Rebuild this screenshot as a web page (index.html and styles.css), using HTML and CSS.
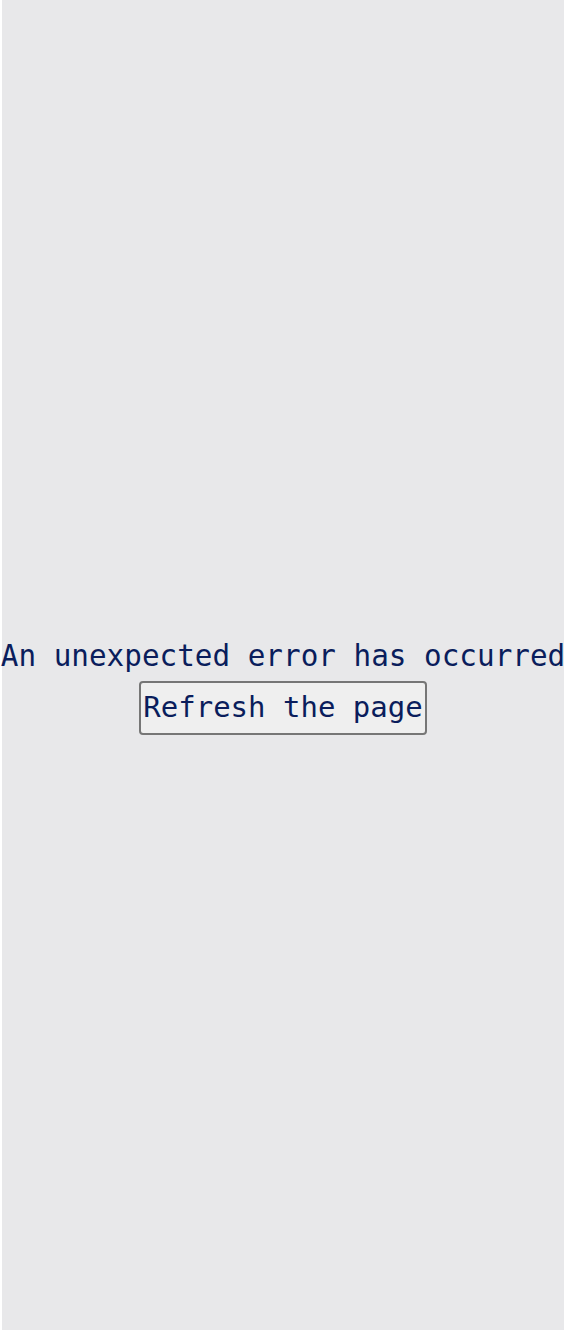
FILE: index.html
```html
<!DOCTYPE html>
<html>
<head>
<meta charset="utf-8">
<link rel="stylesheet" href="styles.css">
</head>
<body>
<div class="screen">
  <div class="error">
    <div class="message">An unexpected error has occurred</div>
    <button class="refresh">Refresh the page</button>
  </div>
</div>
</body>
</html>
```
FILE: styles.css
```css
html, body {
  margin: 0;
  padding: 0;
  background: #ffffff;
}
.screen {
  margin-left: 2px;
  width: 562px;
  height: 1330px;
  background: #e8e8ea;
  display: flex;
  align-items: center;
  justify-content: center;
  font-family: "DejaVu Sans Mono", monospace;
  color: #0a1d5c;
}
.error {
  display: flex;
  flex-direction: column;
  align-items: center;
  padding-top: 44px;
}
.message {
  font-size: 29.3px;
  line-height: 34px;
  white-space: nowrap;
}
.refresh {
  margin-top: 8px;
  font-family: "DejaVu Sans Mono", monospace;
  font-size: 29px;
  line-height: 34px;
  color: #0a1d5c;
  background: #efefef;
  border: 2px solid #767676;
  border-radius: 4px;
  padding: 7px 2px 9px;
}
```
